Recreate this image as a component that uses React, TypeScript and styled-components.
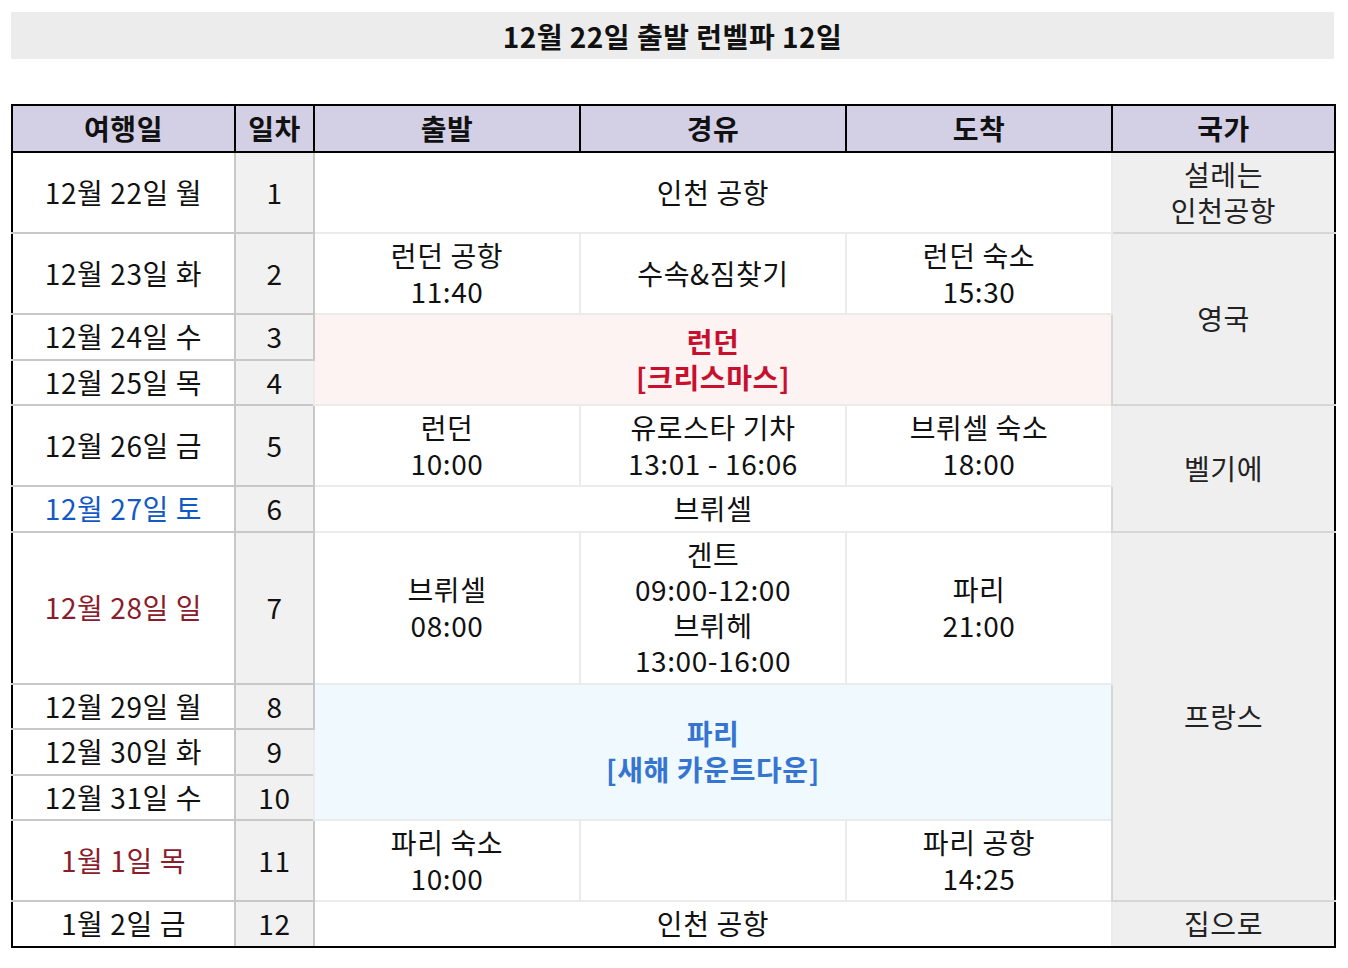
import styled, { createGlobalStyle } from "styled-components";

const GlobalStyle = createGlobalStyle`
  body {
    margin: 0;
    background: #ffffff;
    font-family: "Noto Sans CJK KR", "Noto Sans", sans-serif;
    color: #111111;
  }
`;

const Page = styled.div`
  width: 1323px;
  padding: 12px 0 0 11px;
`;

const TitleBar = styled.div`
  height: 47px;
  background: #ececec;
  display: flex;
  align-items: center;
  justify-content: center;
  font-size: 28px;
  font-weight: 700;
  letter-spacing: 0.5px;
  margin-bottom: 45px;
`;

const Table = styled.table`
  width: 1323px;
  border-collapse: collapse;
  table-layout: fixed;
  border: 2px solid #000;
  font-size: 28px;
  line-height: 35.5px;
  letter-spacing: 0.6px;
  text-align: center;

  tbody tr:last-child td {
    border-bottom: 2px solid #000;
  }
`;

const HeadCell = styled.th`
  background: #d3cfe5;
  border: 2px solid #000;
  height: 45px;
  padding: 0;
  font-weight: 700;
`;

type Tone = "normal" | "sat" | "holiday";

const toneColor: Record<Tone, string> = {
  normal: "#111111",
  sat: "#1259c6",
  holiday: "#8a1c2c",
};

const DateCell = styled.td<{ $tone?: Tone }>`
  border: 2px solid #c8c8c8;
  border-left: 2px solid #000;
  padding: 4px 4px;
  color: ${(p) => toneColor[p.$tone ?? "normal"]};
`;

const DayCell = styled.td`
  border: 2px solid #c8c8c8;
  background: #f1f1f1;
  padding: 4px 4px;
`;

const Cell = styled.td`
  border: 2px solid #ebebeb;
  padding: 4px 4px;
`;

const HighlightCell = styled.td<{ $variant: "xmas" | "newyear" }>`
  border: 2px solid #ebebeb;
  padding: 4px 4px;
  font-weight: 700;
  background: ${(p) => (p.$variant === "xmas" ? "#fdf3f3" : "#eff9fe")};
  color: ${(p) => (p.$variant === "xmas" ? "#c8102e" : "#3575d1")};
`;

const CountryCell = styled.td`
  border: 2px solid #d6d6d6;
  border-right: 2px solid #000;
  background: #efefef;
  padding: 4px 4px;
  color: #222;
`;

const Lines = ({ items }: { items: string[] }) => (
  <>
    {items.map((t, i) => (
      <div key={i}>{t}</div>
    ))}
  </>
);

export default function App() {
  return (
    <>
      <GlobalStyle />
      <Page>
        <TitleBar>12월 22일 출발 런벨파 12일</TitleBar>
        <Table>
          <colgroup>
            <col style={{ width: 223 }} />
            <col style={{ width: 79 }} />
            <col style={{ width: 266 }} />
            <col style={{ width: 266 }} />
            <col style={{ width: 266 }} />
            <col style={{ width: 223 }} />
          </colgroup>
          <thead>
            <tr>
              <HeadCell>여행일</HeadCell>
              <HeadCell>일차</HeadCell>
              <HeadCell>출발</HeadCell>
              <HeadCell>경유</HeadCell>
              <HeadCell>도착</HeadCell>
              <HeadCell>국가</HeadCell>
            </tr>
          </thead>
          <tbody>
            <tr>
              <DateCell>12월 22일 월</DateCell>
              <DayCell>1</DayCell>
              <Cell colSpan={3}>인천 공항</Cell>
              <CountryCell>
                <Lines items={["설레는", "인천공항"]} />
              </CountryCell>
            </tr>
            <tr>
              <DateCell>12월 23일 화</DateCell>
              <DayCell>2</DayCell>
              <Cell>
                <Lines items={["런던 공항", "11:40"]} />
              </Cell>
              <Cell>수속&amp;짐찾기</Cell>
              <Cell>
                <Lines items={["런던 숙소", "15:30"]} />
              </Cell>
              <CountryCell rowSpan={3}>영국</CountryCell>
            </tr>
            <tr>
              <DateCell>12월 24일 수</DateCell>
              <DayCell>3</DayCell>
              <HighlightCell $variant="xmas" colSpan={3} rowSpan={2}>
                <Lines items={["런던", "[크리스마스]"]} />
              </HighlightCell>
            </tr>
            <tr>
              <DateCell>12월 25일 목</DateCell>
              <DayCell>4</DayCell>
            </tr>
            <tr>
              <DateCell>12월 26일 금</DateCell>
              <DayCell>5</DayCell>
              <Cell>
                <Lines items={["런던", "10:00"]} />
              </Cell>
              <Cell>
                <Lines items={["유로스타 기차", "13:01 - 16:06"]} />
              </Cell>
              <Cell>
                <Lines items={["브뤼셀 숙소", "18:00"]} />
              </Cell>
              <CountryCell rowSpan={2}>벨기에</CountryCell>
            </tr>
            <tr>
              <DateCell $tone="sat">12월 27일 토</DateCell>
              <DayCell>6</DayCell>
              <Cell colSpan={3}>브뤼셀</Cell>
            </tr>
            <tr>
              <DateCell $tone="holiday">12월 28일 일</DateCell>
              <DayCell>7</DayCell>
              <Cell>
                <Lines items={["브뤼셀", "08:00"]} />
              </Cell>
              <Cell>
                <Lines items={["겐트", "09:00-12:00", "브뤼헤", "13:00-16:00"]} />
              </Cell>
              <Cell>
                <Lines items={["파리", "21:00"]} />
              </Cell>
              <CountryCell rowSpan={5}>프랑스</CountryCell>
            </tr>
            <tr>
              <DateCell>12월 29일 월</DateCell>
              <DayCell>8</DayCell>
              <HighlightCell $variant="newyear" colSpan={3} rowSpan={3}>
                <Lines items={["파리", "[새해 카운트다운]"]} />
              </HighlightCell>
            </tr>
            <tr>
              <DateCell>12월 30일 화</DateCell>
              <DayCell>9</DayCell>
            </tr>
            <tr>
              <DateCell>12월 31일 수</DateCell>
              <DayCell>10</DayCell>
            </tr>
            <tr>
              <DateCell $tone="holiday">1월 1일 목</DateCell>
              <DayCell>11</DayCell>
              <Cell>
                <Lines items={["파리 숙소", "10:00"]} />
              </Cell>
              <Cell></Cell>
              <Cell>
                <Lines items={["파리 공항", "14:25"]} />
              </Cell>
            </tr>
            <tr>
              <DateCell>1월 2일 금</DateCell>
              <DayCell>12</DayCell>
              <Cell colSpan={3}>인천 공항</Cell>
              <CountryCell>집으로</CountryCell>
            </tr>
          </tbody>
        </Table>
      </Page>
    </>
  );
}
